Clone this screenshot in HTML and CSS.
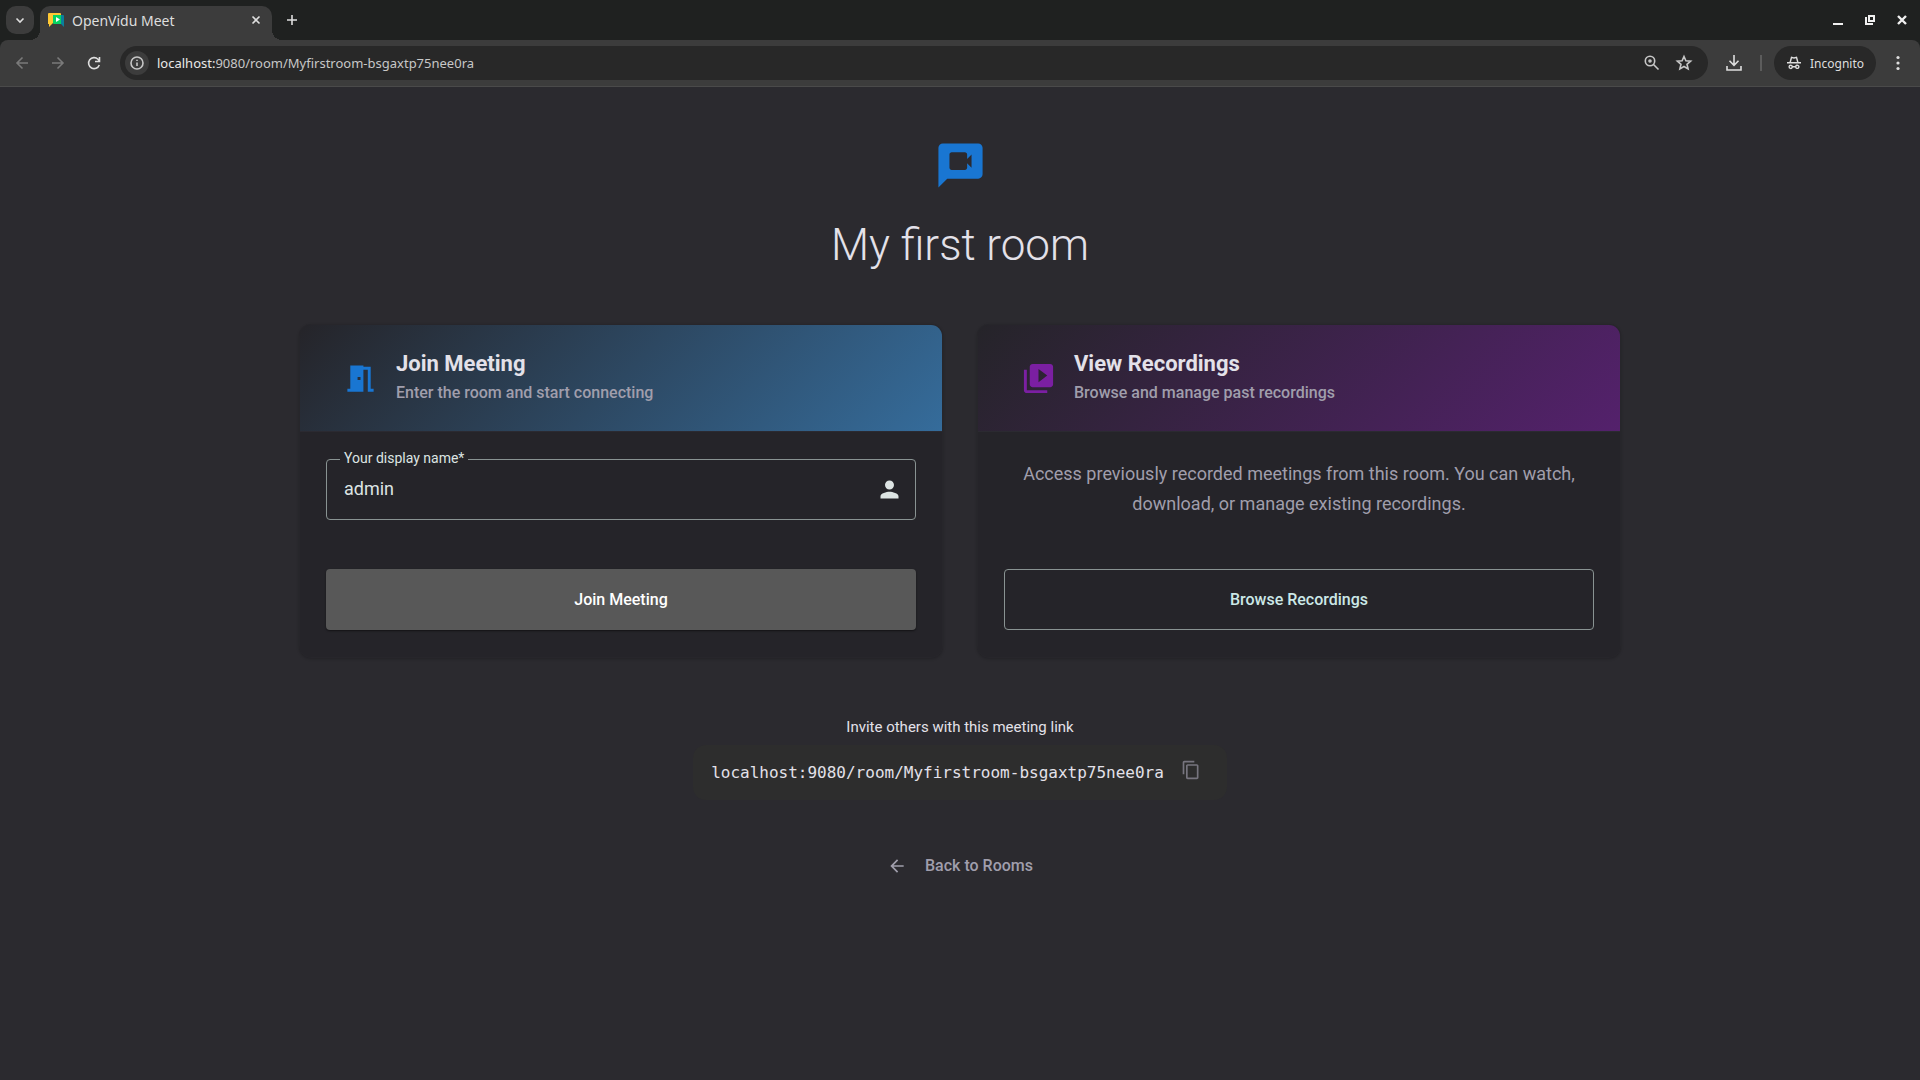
FILE: index.html
```html
<!DOCTYPE html>
<html lang="en">
<head>
  <meta charset="UTF-8">
  <title>OpenVidu Meet</title>
  <link rel="stylesheet" href="styles.css">
</head>
<body>
  <header class="browser">
    <div class="tab-strip">
      <button class="tab-search" aria-label="Search tabs">
        <svg width="16" height="16" viewBox="0 0 16 16" class="line"><path d="M4.500 6.500 8 10l3.500-3.500"/></svg>
      </button>
      <div class="tab">
        <svg class="favicon" width="16" height="16" viewBox="0 0 16 16">
          <path fill="#0b7f9c" d="M10 3h5q1 0 1 1v11l-3-3h-3z"/>
          <path fill="#ffc833" d="M1 1h11q1 0 1 1v9H5l-4 4V12H0V2q0-1 1-1z"/>
          <path fill="#06d362" d="M5 3h8v9H6q-1 0-1-1z"/>
          <path fill="#fff" d="M8 5v5l4-2.500z"/>
        </svg>
        <span class="tab-title">OpenVidu Meet</span>
        <button class="tab-close" aria-label="Close tab">
          <svg width="16" height="16" viewBox="0 0 16 16" class="line"><path d="m4.500 4.500 7 7m0-7-7 7"/></svg>
        </button>
      </div>
      <button class="new-tab" aria-label="New tab">
        <svg width="16" height="16" viewBox="0 0 16 16" class="line"><path d="M8 3v10M3 8h10"/></svg>
      </button>
      <div class="window-buttons">
        <button aria-label="Minimize"><svg width="12" height="12" viewBox="0 0 12 12"><path d="M1 9h10v2H1z"/></svg></button>
        <button aria-label="Restore"><svg width="12" height="12" viewBox="0 0 12 12"><path fill-rule="evenodd" d="M4 1h7v7H4zm2 2v3h3V3zM1 3h2v6h6v2H1z"/></svg></button>
        <button aria-label="Close window"><svg width="12" height="12" viewBox="0 0 12 12" class="bold-line"><path d="m2 2 8 8m0-8-8 8"/></svg></button>
      </div>
    </div>

    <div class="toolbar">
      <button class="nav-button" aria-label="Back" disabled>
        <svg width="16" height="16" viewBox="0 0 16 16" class="line"><path d="M14 8H3m5.500-5.500L3 8l5.500 5.500"/></svg>
      </button>
      <button class="nav-button" aria-label="Forward" disabled>
        <svg width="16" height="16" viewBox="0 0 16 16" class="line"><path d="M2 8h11M7.500 2.500 13 8l-5.500 5.500"/></svg>
      </button>
      <button class="nav-button" aria-label="Reload">
        <svg width="16" height="16" viewBox="0 0 16 16" class="line"><path d="M13.300 10A5.500 5.500 0 1 1 12 4.200L13.500 6M13.500 2v4.500H9"/></svg>
      </button>
      <div class="omnibox">
        <button class="site-info" aria-label="View site information">
          <svg width="16" height="16" viewBox="0 0 16 16" class="line"><circle cx="8" cy="8" r="6"/><path d="M8 7.500V11M8 4.800v1.200"/></svg>
        </button>
        <span class="url"><span class="host">localhost:</span>9080/room/Myfirstroom-bsgaxtp75nee0ra</span>
        <button class="omnibox-button" aria-label="Zoom">
          <svg width="18" height="18" viewBox="0 0 18 18" class="line"><circle cx="7" cy="7" r="4.700"/><path d="m10.500 10.500 5 5"/><circle cx="7" cy="7" r="1"/></svg>
        </button>
        <button class="omnibox-button" aria-label="Bookmark this tab">
          <svg width="18" height="18" viewBox="0 0 18 18" class="line"><path d="m9 2.500 1.900 4.300 4.700.4-3.600 3.100 1.100 4.600L9 12.500l-4.100 2.400L6 10.300 2.400 7.200l4.700-.4z"/></svg>
        </button>
      </div>
      <button class="download" aria-label="Downloads">
        <svg width="18" height="18" viewBox="0 0 18 18" class="line"><path d="M9 1v10M4.500 6.800 9 11.300l4.500-4.500M2 12v4h14v-4"/></svg>
      </button>
      <span class="divider"></span>
      <button class="incognito">
        <svg width="16" height="16" viewBox="0 0 16 16">
          <path fill-rule="evenodd" d="M1 7h2.500L5 1.500 8 2.300l3-.8L12.500 7H15v1.500H1zM5 7h6l-1-3.700-2 .5-2-.5z"/>
          <path fill-rule="evenodd" d="M4.700 9.500a2.300 2.300 0 0 1 2.200 1.600h2.200a2.300 2.300 0 1 1 0 1.400H6.900a2.300 2.300 0 1 1-2.200-3zm0 1.400a.9.9 0 1 0 0 1.800.9.9 0 0 0 0-1.800zm6.600 0a.9.9 0 1 0 0 1.800.9.9 0 0 0 0-1.800z"/>
        </svg>
        Incognito
      </button>
      <button class="menu" aria-label="Menu">
        <svg width="16" height="16" viewBox="0 0 16 16"><circle cx="8" cy="2.500" r="1.600"/><circle cx="8" cy="8" r="1.600"/><circle cx="8" cy="13.500" r="1.600"/></svg>
      </button>
    </div>
  </header>

  <main class="page">
    <div class="room-header">
      <svg class="room-icon" viewBox="0 0 24 24"><path fill-rule="evenodd" d="M20 2H4c-1.100 0-2 .9-2 2v18l4-4h14c1.100 0 2-.9 2-2V4c0-1.100-.9-2-2-2zM8 6h6c.55 0 1 .45 1 1v2l2-2v6l-2-2v2c0 .55-.45 1-1 1H8c-.55 0-1-.45-1-1V7c0-.55.45-1 1-1z"/></svg>
      <h1>My first room</h1>
    </div>

    <div class="cards">
      <section class="card join">
        <div class="card-header">
          <svg class="card-icon" viewBox="0 0 24 24"><path d="M14 6v15H3v-2h2V3h9v1h5v15h2v2h-4V6h-3zm-4 5v2h2v-2h-2z"/></svg>
          <div>
            <h2>Join Meeting</h2>
            <p class="subtitle">Enter the room and start connecting</p>
          </div>
        </div>
        <form class="card-body">
          <div class="field">
            <label for="displayName">Your display name*</label>
            <input id="displayName" name="displayName" type="text" value="admin">
            <svg class="field-icon" viewBox="0 0 24 24"><path d="M12 12c2.210 0 4-1.790 4-4s-1.790-4-4-4-4 1.790-4 4 1.790 4 4 4zm0 2c-2.670 0-8 1.340-8 4v2h16v-2c0-2.660-5.330-4-8-4z"/></svg>
          </div>
          <button type="button" class="button filled">Join Meeting</button>
        </form>
      </section>

      <section class="card recordings">
        <div class="card-header">
          <svg class="card-icon" viewBox="0 0 24 24"><path d="M4 6H2v14c0 1.100.9 2 2 2h14v-2H4V6zm16-4H8c-1.100 0-2 .9-2 2v12c0 1.100.9 2 2 2h12c1.100 0 2-.9 2-2V4c0-1.100-.9-2-2-2zm-8 12.500v-9l6 4.500-6 4.500z"/></svg>
          <div>
            <h2>View Recordings</h2>
            <p class="subtitle">Browse and manage past recordings</p>
          </div>
        </div>
        <div class="card-body">
          <p class="description">Access previously recorded meetings from this room. You can watch, download, or manage existing recordings.</p>
          <button type="button" class="button outlined">Browse Recordings</button>
        </div>
      </section>
    </div>

    <div class="share">
      <p>Invite others with this meeting link</p>
      <div class="share-link">
        <span>localhost:9080/room/Myfirstroom-bsgaxtp75nee0ra</span>
        <button aria-label="Copy link">
          <svg width="20" height="20" viewBox="0 0 24 24"><path d="M16 1H4c-1.100 0-2 .9-2 2v14h2V3h12V1zm3 4H8c-1.100 0-2 .9-2 2v14c0 1.100.9 2 2 2h11c1.100 0 2-.9 2-2V7c0-1.100-.9-2-2-2zm0 16H8V7h11v14z"/></svg>
        </button>
      </div>
    </div>

    <a class="back" href="#">
      <svg width="20" height="20" viewBox="0 0 24 24"><path d="M20 11H7.830l5.590-5.590L12 4l-8 8 8 8 1.410-1.410L7.830 13H20v-2z"/></svg>
      Back to Rooms
    </a>
  </main>
</body>
</html>
```
FILE: styles.css
```css
* {
  box-sizing: border-box;
}

body {
  margin: 0;
  min-height: 100vh;
  background: #2b2a2f;
  color: #e3e1e9;
  font-family: Roboto, sans-serif;
}

h1, h2, p {
  margin: 0;
}

button {
  padding: 0;
  border: none;
  background: none;
  color: inherit;
  font-family: inherit;
  cursor: pointer;
}

svg {
  display: block;
  flex: none;
  fill: currentColor;
}

.line, .bold-line {
  fill: none;
  stroke: currentColor;
  stroke-width: 1.6;
}

.bold-line {
  stroke-width: 2.4;
}

/* browser window */
.browser {
  background: #1f2120;
  color: #dedede;
  font-family: "Noto Sans", sans-serif;
  font-size: 14px;
}

.browser button {
  display: flex;
  align-items: center;
  justify-content: center;
}

.tab-strip {
  display: flex;
  align-items: center;
  height: 40px;
  padding: 0 6px;
}

.tab-search {
  width: 28px;
  height: 28px;
  border-radius: 10px;
  background: #3c3c3c;
}

.tab {
  align-self: flex-end;
  display: flex;
  align-items: center;
  gap: 8px;
  position: relative;
  width: 232px;
  height: 34px;
  margin-left: 6px;
  padding: 0 8px 6px;
  border-radius: 10px 10px 0 0;
  background: #3c3c3c;
}

/* curved feet of the active tab */
.tab::before, .tab::after {
  content: "";
  position: absolute;
  bottom: 0;
  width: 10px;
  height: 10px;
}

.tab::before {
  right: 100%;
  background: radial-gradient(circle at 0 0, transparent 10px, #3c3c3c 10px);
}

.tab::after {
  left: 100%;
  background: radial-gradient(circle at 100% 0, transparent 10px, #3c3c3c 10px);
}

.tab-title {
  flex: 1;
}

.new-tab {
  margin-left: 12px;
}

.window-buttons {
  display: flex;
  gap: 20px;
  margin-left: auto;
  padding-right: 6px;
  color: #f0f0f0;
}

.toolbar {
  display: flex;
  align-items: center;
  height: 47px;
  padding: 0 14px;
  border-bottom: 1px solid #4a4a4a;
  border-radius: 8px 8px 0 0;
  background: #3c3c3c;
}

.nav-button {
  width: 16px;
  margin-right: 20px;
}

.nav-button:disabled {
  color: #7a7a7a;
}

.omnibox {
  flex: 1;
  display: flex;
  align-items: center;
  gap: 14px;
  height: 34px;
  margin-right: 17px;
  margin-left: -2px;
  padding: 0 15px 0 5px;
  border-radius: 17px;
  background: #282828;
  color: #c7c7c7;
}

.site-info {
  width: 24px;
  height: 24px;
  margin-right: -6px;
  border-radius: 50%;
  background: #3c3c3c;
}

.url {
  flex: 1;
  font-size: 13px;
}

.host {
  color: #e8e8e8;
}

.divider {
  width: 2px;
  height: 16px;
  margin: 0 12px 0 17px;
  background: #5c5c5c;
}

.browser .incognito {
  gap: 8px;
  height: 34px;
  padding: 0 12px;
  border-radius: 17px;
  background: #282828;
  font-size: 12px;
}

.menu {
  margin-left: 14px;
}

/* room page */
.page {
  display: flex;
  flex-direction: column;
  align-items: center;
  max-width: 1322px;
  margin: 0 auto;
  padding: 52px 0;
}

.room-header {
  display: flex;
  flex-direction: column;
  align-items: center;
  gap: 26px;
}

.room-icon {
  width: 53px;
  height: 53px;
  color: #1976d2;
}

h1 {
  font-size: 44px;
  font-weight: 300;
  line-height: 54px;
}

.cards {
  display: grid;
  grid-template-columns: 1fr 1fr;
  gap: 34px;
  width: 100%;
  margin-top: 52px;
}

.card {
  display: flex;
  flex-direction: column;
  border: 1px solid #27262b;
  border-radius: 12px;
  background: #252429;
  box-shadow: 0 1px 3px rgba(0, 0, 0, 0.2);
  overflow: hidden;
}

.card-header {
  display: flex;
  align-items: center;
  gap: 18px;
  height: 107px;
  padding: 0 43px;
  border-bottom: 1px solid #2b2a31;
}

.join .card-header {
  background: linear-gradient(135deg, #252429, #356c9b);
}

.recordings .card-header {
  background: linear-gradient(135deg, #252429, #54216c);
}

.card-icon {
  width: 35px;
  height: 35px;
}

.join .card-icon {
  color: #1976d2;
}

.recordings .card-icon {
  color: #7b1fa2;
}

h2 {
  font-size: 22px;
  font-weight: 700;
  line-height: 30px;
}

.subtitle {
  color: #a09eac;
  font-size: 16px;
  font-weight: 500;
  line-height: 28px;
}

.card-body {
  flex: 1;
  display: flex;
  flex-direction: column;
  justify-content: space-between;
  min-height: 225px;
  padding: 27px 26px;
}

.field {
  position: relative;
}

.field label {
  position: absolute;
  top: -9px;
  left: 14px;
  padding: 0 4px;
  background: #252429;
  color: #dde4e3;
  font-size: 14px;
  line-height: 16px;
}

.field input {
  width: 100%;
  height: 61px;
  padding: 0 60px 2px 17px;
  border: 1px solid #899392;
  border-radius: 4px;
  background: transparent;
  color: #dde4e3;
  font-family: inherit;
  font-size: 18px;
}

.field-icon {
  position: absolute;
  top: 17px;
  right: 13px;
  width: 27px;
  height: 27px;
  color: #dde4e3;
}

.button {
  width: 100%;
  height: 61px;
  border-radius: 4px;
  font-size: 16px;
  font-weight: 500;
}

.filled {
  background: #585858;
  color: #fff;
  box-shadow: 0 1px 2px rgba(0, 0, 0, 0.5);
}

.outlined {
  border: 1px solid #899392;
  color: #cce8e7;
}

.description {
  color: #a09eac;
  font-size: 18px;
  line-height: 30px;
  text-align: center;
}

.share {
  display: flex;
  flex-direction: column;
  align-items: center;
  gap: 7px;
  margin-top: 58px;
  font-size: 15px;
  line-height: 22px;
}

.share-link {
  display: flex;
  align-items: center;
  gap: 17px;
  height: 55px;
  padding: 0 26px 0 18px;
  border-radius: 13px;
  background: #2d2d2d;
  font-family: "DejaVu Sans Mono", monospace;
  font-size: 16px;
}

.share-link button {
  padding-bottom: 5px;
  color: #77757f;
}

.back {
  display: flex;
  align-items: center;
  gap: 18px;
  margin-top: 54px;
  color: #a09eac;
  font-size: 16px;
  font-weight: 500;
  line-height: 24px;
  text-decoration: none;
}
```
